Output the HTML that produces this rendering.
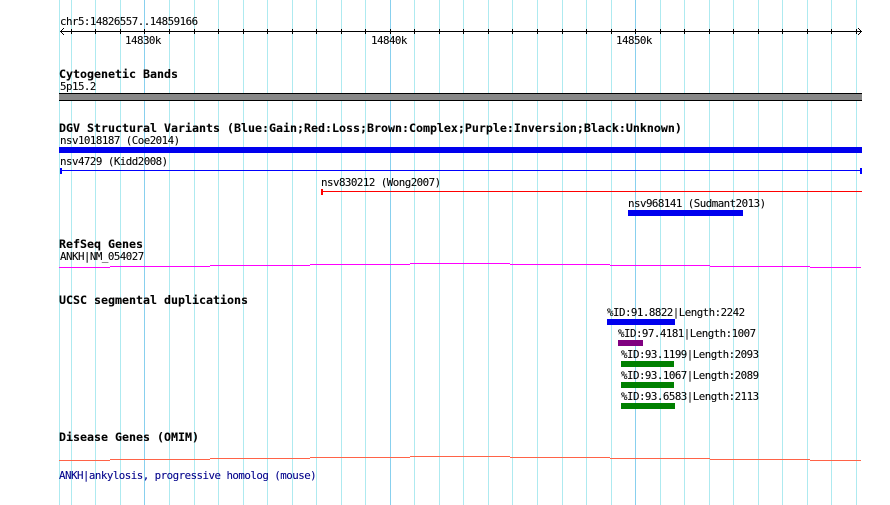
<!DOCTYPE html>
<html>
<head>
<meta charset="utf-8">
<style>
html,body{margin:0;padding:0;background:#fff;width:890px;height:505px;overflow:hidden}
svg{display:block}
text{font-family:"DejaVu Sans Mono","Liberation Mono",monospace;font-size:10.8px;fill:#000;white-space:pre;letter-spacing:-.52px;stroke:#000;stroke-width:.08px}
text.b{font-weight:bold;font-size:11.63px;letter-spacing:0;stroke-width:.1px}
.s{shape-rendering:crispEdges}
</style>
</head>
<body>
<svg width="890" height="505" viewBox="0 0 890 505" xmlns="http://www.w3.org/2000/svg">
<g class="s" fill="#aeeaf0">
<rect x="59" y="0" width="1" height="505"/><rect x="71" y="0" width="1" height="505"/><rect x="95" y="0" width="1" height="505"/><rect x="120" y="0" width="1" height="505"/><rect x="169" y="0" width="1" height="505"/><rect x="194" y="0" width="1" height="505"/><rect x="218" y="0" width="1" height="505"/><rect x="243" y="0" width="1" height="505"/><rect x="267" y="0" width="1" height="505"/><rect x="292" y="0" width="1" height="505"/><rect x="316" y="0" width="1" height="505"/><rect x="341" y="0" width="1" height="505"/><rect x="365" y="0" width="1" height="505"/><rect x="414" y="0" width="1" height="505"/><rect x="439" y="0" width="1" height="505"/><rect x="463" y="0" width="1" height="505"/><rect x="488" y="0" width="1" height="505"/><rect x="512" y="0" width="1" height="505"/><rect x="537" y="0" width="1" height="505"/><rect x="562" y="0" width="1" height="505"/><rect x="586" y="0" width="1" height="505"/><rect x="611" y="0" width="1" height="505"/><rect x="660" y="0" width="1" height="505"/><rect x="684" y="0" width="1" height="505"/><rect x="709" y="0" width="1" height="505"/><rect x="733" y="0" width="1" height="505"/><rect x="758" y="0" width="1" height="505"/><rect x="782" y="0" width="1" height="505"/><rect x="807" y="0" width="1" height="505"/><rect x="831" y="0" width="1" height="505"/><rect x="856" y="0" width="1" height="505"/>
</g>
<g class="s" fill="#88d0ee">
<rect x="144" y="0" width="1" height="505"/><rect x="390" y="0" width="1" height="505"/><rect x="635" y="0" width="1" height="505"/>
</g>

<!-- ruler -->
<g class="s" fill="#000">
<rect x="60" y="31" width="802" height="1"/>
<rect x="71" y="29" width="1" height="5"/><rect x="95" y="29" width="1" height="5"/><rect x="120" y="29" width="1" height="5"/><rect x="144" y="29" width="1" height="5"/><rect x="169" y="29" width="1" height="5"/><rect x="194" y="29" width="1" height="5"/><rect x="218" y="29" width="1" height="5"/><rect x="243" y="29" width="1" height="5"/><rect x="267" y="29" width="1" height="5"/><rect x="292" y="29" width="1" height="5"/><rect x="316" y="29" width="1" height="5"/><rect x="341" y="29" width="1" height="5"/><rect x="365" y="29" width="1" height="5"/><rect x="390" y="29" width="1" height="5"/><rect x="414" y="29" width="1" height="5"/><rect x="439" y="29" width="1" height="5"/><rect x="463" y="29" width="1" height="5"/><rect x="488" y="29" width="1" height="5"/><rect x="512" y="29" width="1" height="5"/><rect x="537" y="29" width="1" height="5"/><rect x="562" y="29" width="1" height="5"/><rect x="586" y="29" width="1" height="5"/><rect x="611" y="29" width="1" height="5"/><rect x="635" y="29" width="1" height="5"/><rect x="660" y="29" width="1" height="5"/><rect x="684" y="29" width="1" height="5"/><rect x="709" y="29" width="1" height="5"/><rect x="733" y="29" width="1" height="5"/><rect x="758" y="29" width="1" height="5"/><rect x="782" y="29" width="1" height="5"/><rect x="807" y="29" width="1" height="5"/><rect x="831" y="29" width="1" height="5"/><rect x="856" y="29" width="1" height="5"/>
<rect x="61" y="30" width="1" height="1"/><rect x="61" y="32" width="1" height="1"/><rect x="62" y="29" width="1" height="1"/><rect x="62" y="33" width="1" height="1"/><rect x="63" y="28" width="1" height="1"/><rect x="63" y="34" width="1" height="1"/>
<rect x="860" y="30" width="1" height="1"/><rect x="860" y="32" width="1" height="1"/><rect x="859" y="29" width="1" height="1"/><rect x="859" y="33" width="1" height="1"/><rect x="858" y="28" width="1" height="1"/><rect x="858" y="34" width="1" height="1"/>
</g>
<text x="60" y="25">chr5:14826557..14859166</text>
<text x="125" y="44">14830k</text>
<text x="371" y="44">14840k</text>
<text x="616" y="44">14850k</text>

<!-- cytoband -->
<text class="b" x="59" y="78">Cytogenetic Bands</text>
<text x="60" y="90">5p15.2</text>
<g class="s">
<rect x="59" y="93" width="803" height="8" fill="#888888"/>
<rect x="59" y="93" width="803" height="1" fill="#000"/>
<rect x="59" y="100" width="803" height="1" fill="#000"/>
</g>

<!-- DGV -->
<text class="b" x="59" y="132">DGV Structural Variants (Blue:Gain;Red:Loss;Brown:Complex;Purple:Inversion;Black:Unknown)</text>
<text x="60" y="144">nsv1018187 (Coe2014)</text>
<text x="60" y="165">nsv4729 (Kidd2008)</text>
<text x="321" y="186">nsv830212 (Wong2007)</text>
<text x="628" y="207">nsv968141 (Sudmant2013)</text>
<g class="s">
<rect x="59" y="147" width="803" height="6" fill="#0000ee"/>
<rect x="60" y="170" width="802" height="1" fill="#0000ff"/>
<rect x="60" y="168" width="2" height="6" fill="#0000ff"/>
<rect x="860" y="168" width="2" height="6" fill="#0000ff"/>
<rect x="321" y="191" width="541" height="1" fill="#ff0000"/>
<rect x="321" y="189" width="2" height="6" fill="#ff0000"/>
<rect x="628" y="210" width="115" height="6" fill="#0000ee"/>
</g>

<!-- RefSeq -->
<text class="b" x="59" y="248">RefSeq Genes</text>
<text x="60" y="260">ANKH|NM_054027</text>
<g class="s" fill="#ff00ff">
<rect x="59" y="267" width="51" height="1"/><rect x="110" y="266" width="100" height="1"/><rect x="210" y="265" width="100" height="1"/><rect x="310" y="264" width="100" height="1"/><rect x="410" y="263" width="100" height="1"/><rect x="510" y="264" width="100" height="1"/><rect x="610" y="265" width="100" height="1"/><rect x="710" y="266" width="100" height="1"/><rect x="810" y="267" width="51" height="1"/>
</g>

<!-- Seg dups -->
<text class="b" x="59" y="304">UCSC segmental duplications</text>
<text x="607" y="316">%ID:91.8822|Length:2242</text>
<text x="618" y="337">%ID:97.4181|Length:1007</text>
<text x="621" y="358">%ID:93.1199|Length:2093</text>
<text x="621" y="379">%ID:93.1067|Length:2089</text>
<text x="621" y="400">%ID:93.6583|Length:2113</text>
<g class="s">
<rect x="607" y="319" width="68" height="6" fill="#0000ee"/>
<rect x="618" y="340" width="25" height="6" fill="#800080"/>
<rect x="621" y="361" width="53" height="6" fill="#008000"/>
<rect x="621" y="382" width="53" height="6" fill="#008000"/>
<rect x="621" y="403" width="54" height="6" fill="#008000"/>
</g>

<!-- OMIM -->
<text class="b" x="59" y="441">Disease Genes (OMIM)</text>
<g class="s" fill="#ff6347">
<rect x="59" y="460" width="51" height="1"/><rect x="110" y="459" width="100" height="1"/><rect x="210" y="458" width="100" height="1"/><rect x="310" y="457" width="100" height="1"/><rect x="410" y="456" width="100" height="1"/><rect x="510" y="457" width="100" height="1"/><rect x="610" y="458" width="100" height="1"/><rect x="710" y="459" width="100" height="1"/><rect x="810" y="460" width="51" height="1"/>
</g>
<text x="59" y="479" style="fill:#00008b;stroke:#00008b">ANKH|ankylosis, progressive homolog (mouse)</text>
</svg>
</body>
</html>
